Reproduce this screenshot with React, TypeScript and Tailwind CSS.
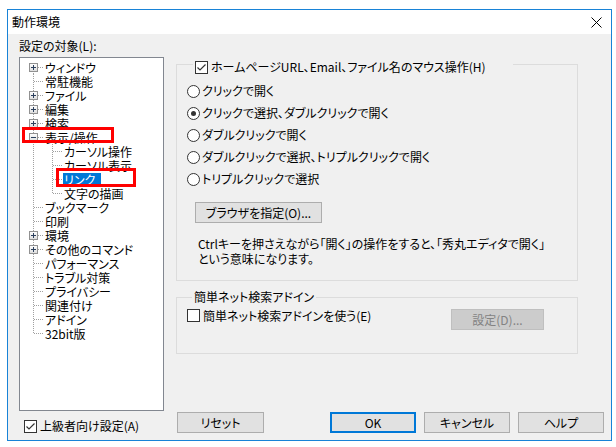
import React from 'react';

type TreeItem = {
  text: string;
  level?: 1 | 2;
  exp?: '+' | '-';
  first?: boolean;
  last?: boolean;
  selected?: boolean;
};

const treeItems: TreeItem[] = [
  { text: 'ウィンドウ', exp: '+', first: true },
  { text: '常駐機能' },
  { text: 'ファイル', exp: '+' },
  { text: '編集', exp: '+' },
  { text: '検索', exp: '+' },
  { text: '表示/操作', exp: '-' },
  { text: 'カーソル操作', level: 2 },
  { text: 'カーソル表示', level: 2 },
  { text: 'リンク', level: 2, selected: true },
  { text: '文字の描画', level: 2, last: true },
  { text: 'ブックマーク' },
  { text: '印刷' },
  { text: '環境', exp: '+' },
  { text: 'その他のコマンド', exp: '+' },
  { text: 'パフォーマンス' },
  { text: 'トラブル対策' },
  { text: 'プライバシー' },
  { text: '関連付け' },
  { text: 'アドイン' },
  { text: '32bit版', last: true },
];

const dot = '#a0a0a0';

// one 19x14 cell of tree connector lines
const TreeCell: React.FC<{ kind: 'tee' | 'last' | 'first' | 'pipe'; exp?: '+' | '-' }> = ({ kind, exp }) => {
  const vTop = kind === 'first' ? 7 : 0;
  const vBottom = kind === 'last' ? 7 : 14;
  return (
    <svg width="19" height="14" viewBox="0 0 19 14" className="shrink-0 block">
      <line x1="9.5" y1={vTop} x2="9.5" y2={vBottom} stroke={dot} strokeDasharray="1 1" />
      {kind !== 'pipe' && (
        <line x1={exp ? 14 : 10} y1="7.5" x2="19" y2="7.5" stroke={dot} strokeDasharray="1 1" />
      )}
      {exp && (
        <>
          <defs>
            <linearGradient id="expg" x1="0" y1="0" x2="0" y2="1">
              <stop offset="0" stopColor="#ffffff" />
              <stop offset="1" stopColor="#dcdcdc" />
            </linearGradient>
          </defs>
          <rect x="5.5" y="3.5" width="8" height="8" fill="url(#expg)" stroke="#919191" />
          <line x1="7" y1="7.5" x2="12" y2="7.5" stroke="#2b3f5c" />
          {exp === '+' && <line x1="9.5" y1="5" x2="9.5" y2="10" stroke="#2b3f5c" />}
        </>
      )}
    </svg>
  );
};

const CheckBox: React.FC<{ checked?: boolean }> = ({ checked }) => (
  <span className="w-[13px] h-[13px] shrink-0 border border-[#333333] bg-white flex items-center justify-center">
    {checked && (
      <svg width="11" height="11" viewBox="0 0 11 11">
        <path d="M1.5 5.5 L4 8 L9.5 2.5" fill="none" stroke="#333333" strokeWidth="1.2" />
      </svg>
    )}
  </span>
);

const Radio: React.FC<{ checked?: boolean }> = ({ checked }) => (
  <svg width="13" height="13" viewBox="0 0 13 13" className="shrink-0">
    <circle cx="6.5" cy="6.5" r="6" fill="#ffffff" stroke="#333333" />
    {checked && <circle cx="6.5" cy="6.5" r="2.5" fill="#333333" />}
  </svg>
);

const Button: React.FC<{ label: string; className?: string; primary?: boolean; disabled?: boolean }> = ({
  label,
  className,
  primary,
  disabled,
}) => (
  <div
    className={
      'h-[21px] flex items-center justify-center shrink-0 ' +
      (disabled
        ? 'bg-[#cccccc] border border-[#bfbfbf] text-[#838383] '
        : primary
        ? 'bg-[#e1e1e1] border-2 border-[#0078d7] '
        : 'bg-[#e1e1e1] border border-[#adadad] ') +
      (className ?? '')
    }
  >
    {label}
  </div>
);

const radios = [
  'クリックで開く',
  'クリックで選択、ダブルクリックで開く',
  'ダブルクリックで開く',
  'ダブルクリックで選択、トリプルクリックで開く',
  'トリプルクリックで選択',
];

export default function App() {
  return (
    <div className="w-[616px] h-[447px] bg-white pt-[9px] pl-[7px] text-[12px] leading-[14px] text-black font-['Noto_Sans_CJK_JP','Noto_Sans',sans-serif] [font-feature-settings:'palt']">
      <div className="w-[605px] h-[432px] border border-[#1883d7] flex flex-col">
        {/* title bar */}
        <div className="h-[24px] bg-white flex items-center justify-between pl-[4px] pr-[9px] shrink-0">
          <span>動作環境</span>
          <svg width="11" height="11" viewBox="0 0 11 11">
            <line x1="0.5" y1="0.5" x2="10.5" y2="10.5" stroke="#000" />
            <line x1="10.5" y1="0.5" x2="0.5" y2="10.5" stroke="#000" />
          </svg>
        </div>

        {/* body */}
        <div className="flex-1 bg-[#f0f0f0] pl-[11px] pr-[7px] pt-[5px] flex flex-col">
          <div className="flex">
            {/* left column */}
            <div className="w-[145px] flex flex-col shrink-0">
              <div className="h-[14px]">設定の対象(L):</div>
              <div className="mt-[4px] h-[354px] border border-[#828790] bg-white relative pt-[2px] pl-[4px]">
                {treeItems.map((it) => {
                  const lvl = it.level ?? 1;
                  return (
                    <div key={it.text} className="h-[14px] flex items-center">
                      {lvl === 1 ? (
                        <TreeCell kind={it.first ? 'first' : it.last ? 'last' : 'tee'} exp={it.exp} />
                      ) : (
                        <>
                          <TreeCell kind="pipe" />
                          <TreeCell kind={it.last ? 'last' : 'tee'} />
                        </>
                      )}
                      <span
                        className={
                          'ml-[1px] px-[1px] h-[13px] leading-[13px] whitespace-nowrap ' +
                          (it.selected ? 'bg-[#0078d7] text-white pr-[6px]' : '')
                        }
                      >
                        {it.text}
                      </span>
                    </div>
                  );
                })}
                {/* red annotation frames */}
                <div className="absolute left-[2px] top-[69px] w-[92px] h-[16px] border-[3px] border-[#ff0000]" />
                <div className="absolute left-[36px] top-[110px] w-[80px] h-[19px] border-[3px] border-[#ff0000]" />
              </div>
            </div>

            {/* right column */}
            <div className="ml-[12px] w-[402px] mt-[15px] flex flex-col">
              <fieldset className="border border-[#dcdcdc] h-[227px] pl-[10px]">
                <legend className="ml-[6px] w-[320px] h-[20px] flex items-end gap-[3px] pl-[2px]">
                  <CheckBox checked />
                  <span className="whitespace-nowrap">ホームページURL、Email、ファイル名のマウス操作(H)</span>
                </legend>
                <div className="pt-[6px] flex flex-col">
                  {radios.map((r, i) => (
                    <div key={r} className="h-[22px] flex items-center gap-[2px]">
                      <Radio checked={i === 1} />
                      <span className="whitespace-nowrap">{r}</span>
                    </div>
                  ))}
                </div>
                <Button label="ブラウザを指定(O)..." className="ml-[8px] mt-[12px] w-[127px]" />
                <div className="ml-[11px] mt-[13px] leading-[15px]">
                  <div className="whitespace-nowrap">Ctrlキーを押さえながら「開く」の操作をすると、「秀丸エディタで開く」</div>
                  <div>という意味になります。</div>
                </div>
              </fieldset>

              <fieldset className="mt-[9px] border border-[#dcdcdc] h-[64px] pl-[10px] pr-[33px]">
                <legend className="ml-[5px] px-[2px] h-[14px]">簡単ネット検索アドイン</legend>
                <div className="pt-[5px] flex items-start">
                  <div className="flex items-center gap-[3px] h-[13px]">
                    <CheckBox />
                    <span className="whitespace-nowrap">簡単ネット検索アドインを使う(E)</span>
                  </div>
                  <Button label="設定(D)..." disabled className="ml-auto w-[93px]" />
                </div>
              </fieldset>
            </div>
          </div>

          {/* bottom row */}
          <div className="mt-[1px] h-[21px] flex items-start">
            <div className="w-[158px] shrink-0 flex items-center gap-[3px] pl-[5px] mt-[7px]">
              <CheckBox checked />
              <span className="whitespace-nowrap">上級者向け設定(A)</span>
            </div>
            <Button label="リセット" className="w-[87px]" />
            <div className="ml-auto flex gap-[8px]">
              <Button label="OK" primary className="w-[86px]" />
              <Button label="キャンセル" className="w-[86px]" />
              <Button label="ヘルプ" className="w-[86px]" />
            </div>
          </div>
        </div>
      </div>
    </div>
  );
}
